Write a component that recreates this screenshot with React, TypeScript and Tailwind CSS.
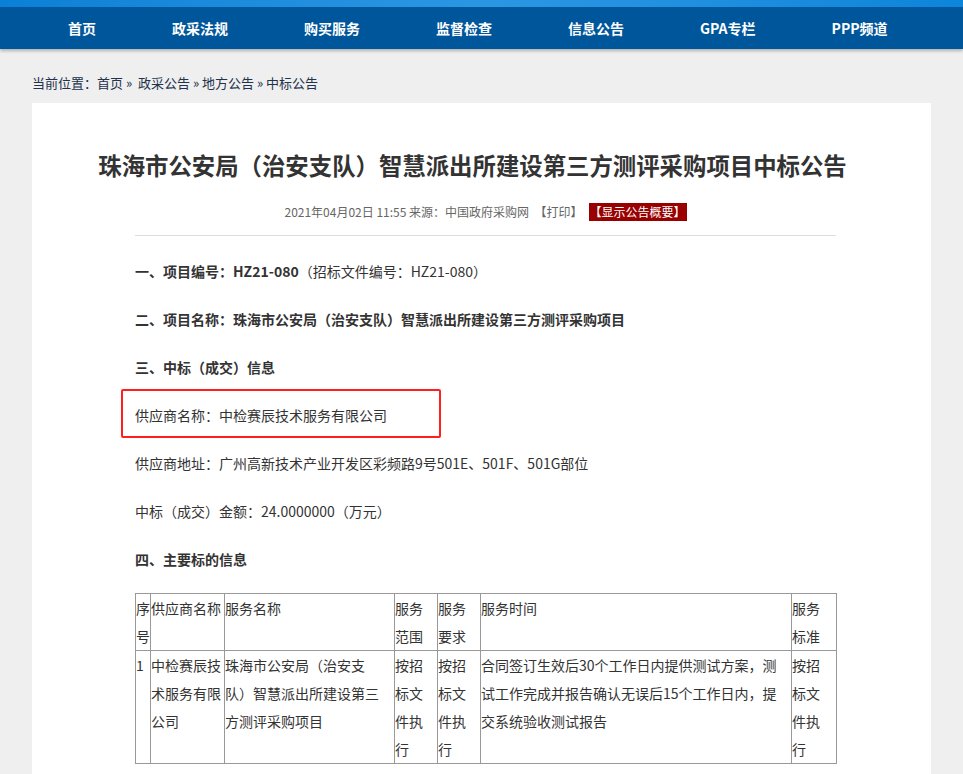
const navItems = ["首页", "政采法规", "购买服务", "监督检查", "信息公告", "GPA专栏", "PPP频道"];

const font = { fontFamily: '"Noto Sans CJK SC", "Microsoft YaHei", sans-serif' };

function Nav() {
  return (
    <div className="relative z-10 shadow-[0_2px_3px_rgba(0,0,0,0.25)]">
      <div className="h-[7px] bg-gradient-to-r from-[#0a80d6] via-[#2b97e3] to-[#0c85da]" />
      <div className="flex h-[42px] items-center bg-[#00569a] pl-[30px]">
        {navItems.map((item) => (
          <a key={item} className="px-[38px] text-[14px] font-bold text-white">
            {item}
          </a>
        ))}
      </div>
    </div>
  );
}

function Breadcrumb() {
  return (
    <div className="pb-[10px] pt-[24px] text-[13px] leading-[20px] text-[#22324a]">
      当前位置：首页 » &nbsp;政采公告 » 地方公告 » 中标公告
    </div>
  );
}

function Para({ children, bold }: { children: React.ReactNode; bold?: boolean }) {
  return (
    <p className={"mb-[20px] text-[14px] leading-[28px] text-[#333] " + (bold ? "font-bold" : "")}>
      {children}
    </p>
  );
}

function InfoTable() {
  const cell = "border border-[#999] p-0 align-top text-left font-normal text-[14px] leading-[28px] text-[#333]";
  return (
    <table className="w-[701px] table-fixed border-collapse">
      <colgroup>
        <col className="w-[15px]" />
        <col className="w-[74px]" />
        <col className="w-[170px]" />
        <col className="w-[43px]" />
        <col className="w-[43px]" />
        <col className="w-[311px]" />
        <col className="w-[45px]" />
      </colgroup>
      <tbody>
        <tr>
          <td className={cell}>序号</td>
          <td className={cell}>供应商名称</td>
          <td className={cell}>服务名称</td>
          <td className={cell + " pr-[4px]"}>服务范围</td>
          <td className={cell + " pr-[4px]"}>服务要求</td>
          <td className={cell}>服务时间</td>
          <td className={cell + " pr-[4px]"}>服务标准</td>
        </tr>
        <tr>
          <td className={cell}>1</td>
          <td className={cell}>中检赛辰技术服务有限公司</td>
          <td className={cell + " pr-[14px]"}>珠海市公安局（治安支队）智慧派出所建设第三方测评采购项目</td>
          <td className={cell + " pr-[4px]"}>按招标文件执行</td>
          <td className={cell + " pr-[4px]"}>按招标文件执行</td>
          <td className={cell + " pr-[10px]"}>
            合同签订生效后30个工作日内提供测试方案，测试工作完成并报告确认无误后15个工作日内，提交系统验收测试报告
          </td>
          <td className={cell + " pr-[4px]"}>按招标文件执行</td>
        </tr>
      </tbody>
    </table>
  );
}

export default function App() {
  return (
    <div className="min-h-screen bg-[#efefef]" style={font}>
      <Nav />
      <div className="mx-auto w-[899px]">
        <Breadcrumb />
        <div className="bg-white pb-[60px] pl-[103px] pr-[95px] pt-[44px]">
          <h1 className="-ml-[73px] -mr-[47px] whitespace-nowrap text-center text-[23.4px] font-bold leading-[36px] text-[#333]">
            珠海市公安局（治安支队）智慧派出所建设第三方测评采购项目中标公告
          </h1>
          <div className="mt-[20px] flex items-center justify-center text-[12px] leading-[18px] text-[#666]">
            <span>2021年04月02日 11:55 来源：中国政府采购网 &nbsp;【打印】</span>
            <span className="ml-[6px] bg-[#990000] px-[1px] text-white">【显示公告概要】</span>
          </div>
          <div className="mb-[21px] mt-[14px] border-t border-[#dddddd]" />

          <Para>
            <b>一、项目编号：HZ21-080</b>（招标文件编号：HZ21-080）
          </Para>
          <Para bold>二、项目名称：珠海市公安局（治安支队）智慧派出所建设第三方测评采购项目</Para>
          <Para bold>三、中标（成交）信息</Para>
          <div className="relative">
            <Para>供应商名称：中检赛辰技术服务有限公司</Para>
            <span className="pointer-events-none absolute left-[-14px] top-[-12px] h-[49px] w-[320px] rounded-[2px] border-2 border-[#ff1f1f]" />
          </div>
          <Para>供应商地址：广州高新技术产业开发区彩频路9号501E、501F、501G部位</Para>
          <Para>中标（成交）金额：24.0000000（万元）</Para>
          <Para bold>四、主要标的信息</Para>
          <InfoTable />
        </div>
      </div>
    </div>
  );
}
